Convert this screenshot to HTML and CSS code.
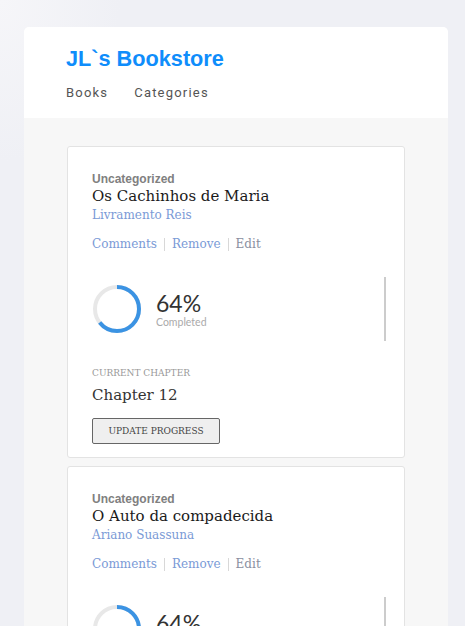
FILE: index.html
```html
<!DOCTYPE html>
<html>
<head>
<meta charset="utf-8">
<link rel="stylesheet" href="styles.css">
</head>
<body>
<div class="app">
  <header class="header">
    <h1 class="brand">JL`s Bookstore</h1>
    <nav class="nav"><a>Books</a><a>Categories</a></nav>
  </header>
  <main class="content">
    <article class="card">
      <div class="cat">Uncategorized</div>
      <h2 class="title">Os Cachinhos de Maria</h2>
      <div class="author">Livramento Reis</div>
      <div class="links"><a>Comments</a><span class="sep"></span><a>Remove</a><span class="sep"></span><a class="edit">Edit</a></div>
      <div class="progress">
        <svg class="ring" width="50" height="50" viewBox="0 0 50 50">
          <circle cx="25" cy="25" r="22" fill="none" stroke="#e8e8e8" stroke-width="4"/>
          <circle cx="25" cy="25" r="22" fill="none" stroke="#3b93e3" stroke-width="4" stroke-dasharray="88.47 200" transform="rotate(-90 25 25)"/>
        </svg>
        <div class="pct"><div class="num">64%</div><div class="done">Completed</div></div>
        <div class="vline"></div>
      </div>
      <div class="chap-label">CURRENT CHAPTER</div>
      <div class="chap">Chapter 12</div>
      <button class="btn">UPDATE PROGRESS</button>
    </article>
    <article class="card">
      <div class="cat">Uncategorized</div>
      <h2 class="title">O Auto da compadecida</h2>
      <div class="author">Ariano Suassuna</div>
      <div class="links"><a>Comments</a><span class="sep"></span><a>Remove</a><span class="sep"></span><a class="edit">Edit</a></div>
      <div class="progress">
        <svg class="ring" width="50" height="50" viewBox="0 0 50 50">
          <circle cx="25" cy="25" r="22" fill="none" stroke="#e8e8e8" stroke-width="4"/>
          <circle cx="25" cy="25" r="22" fill="none" stroke="#3b93e3" stroke-width="4" stroke-dasharray="88.47 200" transform="rotate(-90 25 25)"/>
        </svg>
        <div class="pct"><div class="num">64%</div><div class="done">Completed</div></div>
        <div class="vline"></div>
      </div>
      <div class="chap-label">CURRENT CHAPTER</div>
      <div class="chap">Chapter 12</div>
      <button class="btn">UPDATE PROGRESS</button>
    </article>
  </main>
</div>
</body>
</html>
```
FILE: styles.css
```css
html, body { margin: 0; padding: 0; }
body {
  background: radial-gradient(ellipse at 0 0, #f6f6f9 0, #eff0f5 120px, #eff0f5 100%);
  font-family: "Liberation Sans", Arial, sans-serif;
  height: 626px;
  overflow: hidden;
}
.app {
  margin: 27px 17px 0 24px;
  border-radius: 5px;
  overflow: hidden;
  background: #f7f7f7;
  min-height: 700px;
}
.header {
  background: #fff;
  padding: 20px 42px 18px;
  height: 53px;
}
.brand {
  margin: 0;
  font-family: "Liberation Sans", Arial, sans-serif;
  font-weight: bold;
  font-size: 21.7px;
  line-height: 24px;
  color: #0f8dfb;
}
.nav {
  display: flex;
  gap: 26px;
  margin-top: 14px;
}
.nav a {
  font-family: Roboto, "Liberation Sans", sans-serif;
  font-size: 13px;
  font-weight: 400;
  letter-spacing: 1.2px;
  color: #555;
  line-height: 16px;
}
.content {
  padding: 28px 43px 0;
  display: flex;
  flex-direction: column;
  gap: 8px;
}
.card {
  background: #fff;
  border: 1px solid #e3e3e3;
  border-radius: 3px;
  padding: 25px 24px 13px;
  font-family: "DejaVu Serif", serif;
}
.cat {
  font-family: "Liberation Sans", Arial, sans-serif;
  font-weight: bold;
  font-size: 12px;
  line-height: 14px;
  color: #808080;
}
.title {
  margin: 0;
  font-weight: normal;
  font-size: 15px;
  line-height: 21px;
  color: #1a1a1a;
}
.author {
  font-size: 12px;
  line-height: 17px;
  color: #7a9ad6;
}
.links {
  display: flex;
  align-items: center;
  margin-top: 12px;
  font-size: 12px;
  line-height: 16px;
  color: #7a9ad6;
}
.links .edit { color: #8a8fa0; }
.sep {
  width: 1px;
  height: 13px;
  background: #d8d8d8;
  margin: 0 7px;
}
.progress {
  display: flex;
  align-items: center;
  margin-top: 25px;
  height: 64px;
}
.ring { flex: none; margin-left: 0; }
.pct { margin-left: 14px; flex: 1; }
.num {
  font-family: Lato, "Open Sans", sans-serif;
  font-size: 23px;
  line-height: 25px;
  color: #333;
}
.done {
  font-family: Lato, "Open Sans", sans-serif;
  font-size: 10.5px;
  line-height: 12px;
  color: #aaa;
}
.vline {
  width: 2px;
  height: 64px;
  background: #ccc;
  margin-right: -6px;
}
.chap-label {
  margin-top: 26px;
  font-size: 9px;
  line-height: 12px;
  color: #999;
}
.chap {
  margin-top: 7px;
  font-size: 15px;
  line-height: 18px;
  color: #333;
}
.btn {
  margin-top: 14px;
  width: 128px;
  height: 26px;
  border: 1px solid #666;
  border-radius: 2px;
  background: #efefef;
  font-family: "DejaVu Serif", serif;
  font-size: 9px;
  color: #444;
  padding: 0;
}
```
